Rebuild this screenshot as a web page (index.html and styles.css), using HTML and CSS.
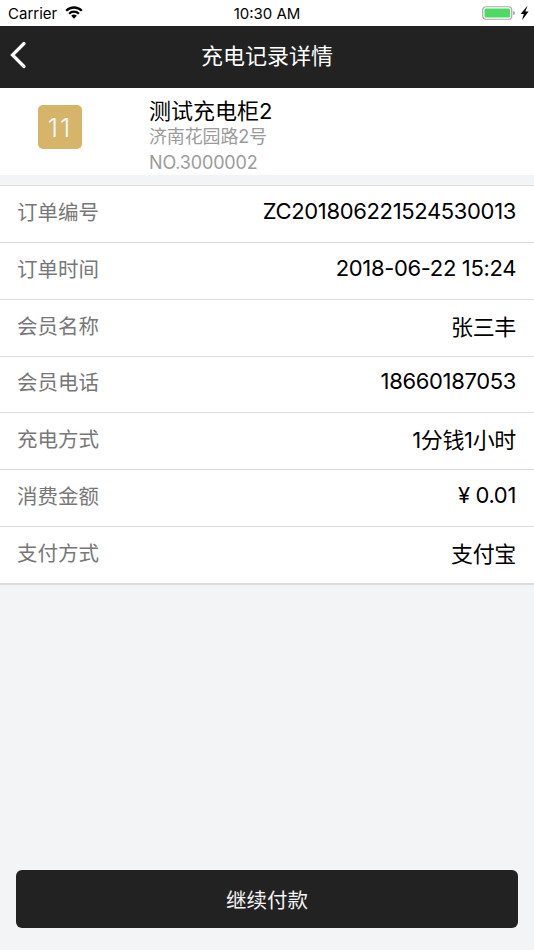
FILE: index.html
```html
<!DOCTYPE html>
<html lang="zh-CN">
<head>
<meta charset="utf-8">
<title>充电记录详情</title>
<link rel="stylesheet" href="styles.css">
</head>
<body>
<div class="page">
  <div class="status">
    <div class="status-left">
      <span class="carrier">Carrier</span>
      <svg class="wifi" width="18" height="13" viewBox="0 0 18 13"><path d="M0.4 3.9 A12.2 12.2 0 0 1 17.6 3.9 L16 5.6 A9.9 9.9 0 0 0 2 5.6 Z" fill="#000"/><path d="M3.3 6.9 A8 8 0 0 1 14.7 6.9 L13.1 8.5 A5.7 5.7 0 0 0 4.9 8.5 Z" fill="#000"/><path d="M6.2 9.8 A3.9 3.9 0 0 1 11.8 9.8 L9 12.7 Z" fill="#000"/></svg>
    </div>
    <span class="time">10:30 AM</span>
    <div class="status-right">
      <svg width="47" height="16" viewBox="0 0 47 16"><rect x="0.75" y="1.75" width="29" height="12.5" rx="3.2" fill="none" stroke="#a8a8a8" stroke-width="1.2"/><rect x="2.5" y="3.5" width="25.5" height="9" rx="1.5" fill="#4cd964"/><path d="M31 6 a2 2 0 0 1 0 4 Z" fill="#a8a8a8"/><path d="M45.5 0.8 L38.6 9 L41.8 9 L40 15.2 L46.6 6.6 L43.4 6.6 Z" fill="#000"/></svg>
    </div>
  </div>
  <header class="nav">
    <svg class="back" width="18" height="28" viewBox="0 0 18 28"><path d="M15 2.5 L3.5 14 L15 25.5" fill="none" stroke="#fff" stroke-width="3.2" stroke-linecap="round"/></svg>
    <h1 class="nav-title">充电记录详情</h1>
  </header>
  <section class="cabinet">
    <div class="badge-col"><div class="badge">11</div></div>
    <div class="cabinet-info">
      <div class="cabinet-name">测试充电柜2</div>
      <div class="cabinet-sub">济南花园路2号</div>
      <div class="cabinet-sub">NO.3000002</div>
    </div>
  </section>
  <section class="details">
    <div class="row"><span class="label">订单编号</span><span class="value">ZC201806221524530013</span></div>
    <div class="row"><span class="label">订单时间</span><span class="value">2018-06-22 15:24</span></div>
    <div class="row"><span class="label">会员名称</span><span class="value">张三丰</span></div>
    <div class="row"><span class="label">会员电话</span><span class="value">18660187053</span></div>
    <div class="row"><span class="label">充电方式</span><span class="value">1分钱1小时</span></div>
    <div class="row"><span class="label">消费金额</span><span class="value">¥ 0.01</span></div>
    <div class="row"><span class="label">支付方式</span><span class="value">支付宝</span></div>
  </section>
  <div class="footer"><button class="pay">继续付款</button></div>
</div>
</body>
</html>
```
FILE: styles.css
```css
* { box-sizing: border-box; }
html, body { margin: 0; padding: 0; }
body {
  font-family: "Inter", "Noto Sans CJK SC", sans-serif;
  background: #f3f4f6;
}
.page {
  width: 534px;
  height: 950px;
  display: flex;
  flex-direction: column;
  background: #f3f4f6;
  overflow: hidden;
}
.status {
  height: 26px;
  background: #fff;
  display: flex;
  align-items: center;
  justify-content: space-between;
  padding: 0 5px 0 8px;
  position: relative;
  font-size: 15px;
  color: #000;
}
.status-left { display: flex; align-items: center; gap: 8px; }
.wifi { display: block; margin-top: -2px; }
.status-right { display: flex; }
.status-right svg { display: block; }
.time {
  position: absolute;
  left: 0;
  right: 0;
  text-align: center;
  font-size: 15px;
}
.nav {
  height: 62px;
  background: #222222;
  display: flex;
  align-items: center;
  justify-content: center;
  position: relative;
  padding-bottom: 7px;
}
.back { position: absolute; left: 9px; top: 15px; }
.nav-title {
  margin: 0;
  font-size: 22px;
  font-weight: 400;
  color: #fff;
  font-family: "Noto Sans CJK SC", sans-serif;
}
.cabinet {
  height: 87px;
  background: #fff;
  display: flex;
}
.badge-col {
  width: 149px;
  display: flex;
  align-items: center;
  padding: 0 0 9px 38px;
}
.badge {
  width: 44px;
  height: 44px;
  border-radius: 5px;
  background: #d6b56a;
  color: #fff;
  font-size: 26px;
  font-weight: 300;
  letter-spacing: 2px;
  display: flex;
  align-items: center;
  justify-content: center;
}
.cabinet-info { display: flex; flex-direction: column; padding-top: 10px; }
.cabinet-name { font-size: 22px; line-height: 26px; color: #000; }
.cabinet-sub { font-size: 18px; line-height: 25.5px; color: #9b9b9b; letter-spacing: -0.15px; }
.details {
  margin-top: 10px;
  background: #fff;
  border-top: 1px solid #dcdcdc;
}
.row {
  height: 56.85px;
  display: flex;
  align-items: center;
  justify-content: space-between;
  padding: 0 18px 6px 17px;
  border-bottom: 1px solid #dcdcdc;
}
.row:last-child { height: 58px; border-bottom-width: 2px; }
.label { color: #777; font-size: 20.5px; }
.value { color: #000; font-size: 22px; letter-spacing: -0.35px; }
.footer { margin-top: auto; padding: 0 16px 22px; }
.pay {
  display: block;
  width: 100%;
  height: 58px;
  background: #222222;
  border: 0;
  border-radius: 6px;
  color: #f4f4f4;
  font-family: "Noto Sans CJK SC", sans-serif;
  font-size: 20.5px;
  font-weight: 400;
}
```
